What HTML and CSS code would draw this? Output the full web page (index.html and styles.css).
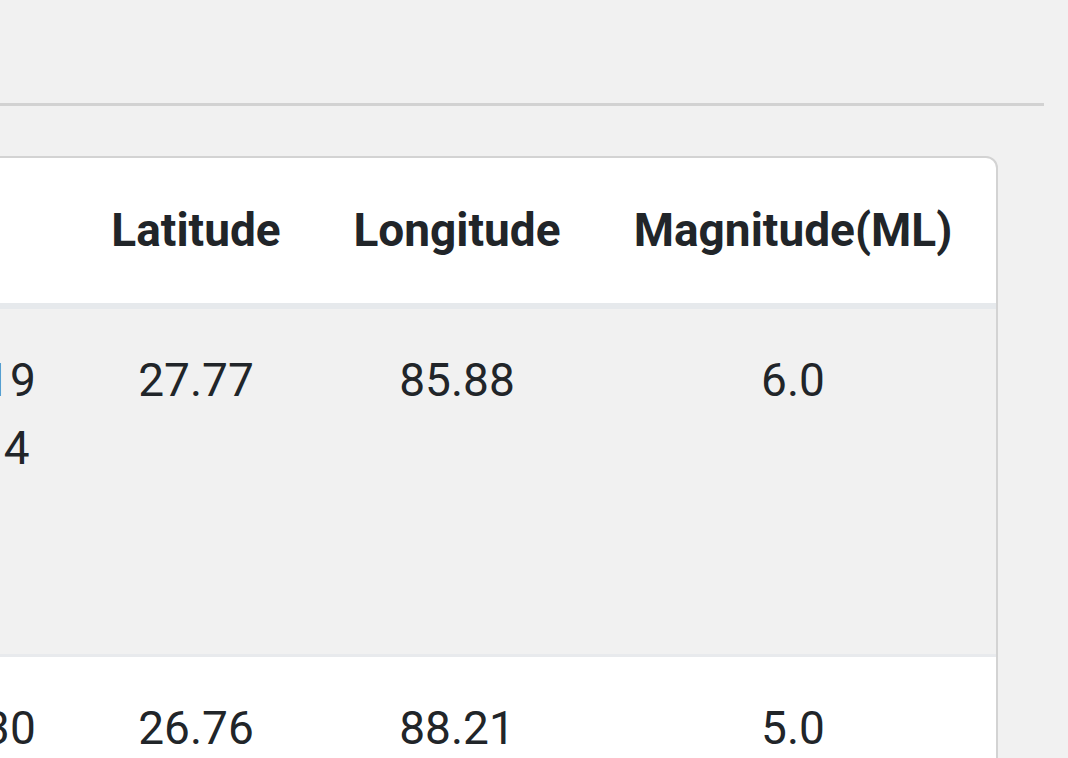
FILE: index.html
```html
<!DOCTYPE html>
<html lang="en">
<head>
<meta charset="utf-8">
<title>Earthquake list</title>
<link rel="stylesheet" href="styles.css">
</head>
<body>
<main class="page">
  <hr class="rule">
  <section class="card">
    <table class="quakes">
      <colgroup>
        <col class="c-date">
        <col class="c-lat">
        <col class="c-lon">
        <col class="c-mag">
      </colgroup>
      <thead>
        <tr>
          <th>Date / Time</th>
          <th>Latitude</th>
          <th>Longitude</th>
          <th>Magnitude(ML)</th>
        </tr>
      </thead>
      <tbody>
        <tr class="striped">
          <td>2015/04/25 11:56:19<br>2015-04-25 06:11:14<br>Nepal Time<br>(UTC +5:45)</td>
          <td>27.77</td>
          <td>85.88</td>
          <td>6.0</td>
        </tr>
        <tr>
          <td>2015/05/12 12:50:30<br>2015-05-12 07:05:25<br>Nepal Time<br>(UTC +5:45)</td>
          <td>26.76</td>
          <td>88.21</td>
          <td>5.0</td>
        </tr>
      </tbody>
    </table>
  </section>
</main>
</body>
</html>
```

FILE: styles.css
```css
html, body {
  margin: 0;
  padding: 0;
  overflow: hidden;
  background: #f1f1f1;
}

body {
  font-family: Roboto, "Liberation Sans", sans-serif;
  color: #212529;
}

.page {
  box-sizing: border-box;
  width: 1476px;
  margin-left: -432px;
  padding-top: 103px;
}

.rule {
  margin: 0 0 50px 0;
  border: 0;
  border-top: 3px solid #d2d2d2;
  height: 0;
}

.card {
  margin-right: 46px;
  background: #ffffff;
  border: 2px solid #d3d3d3;
  border-radius: 12px;
  overflow: hidden;
}

.quakes {
  width: 100%;
  table-layout: fixed;
  border-collapse: collapse;
}

.c-date { width: 498px; }
.c-lat { width: 256px; }
.c-lon { width: 266px; }
.c-mag { width: 406px; }

.quakes th {
  font-size: 46px;
  font-weight: 700;
  line-height: 69px;
  padding: 38px 0;
  text-align: center;
  white-space: nowrap;
  border-bottom: 6px solid #e6e9ec;
}

.quakes td {
  font-size: 46px;
  font-weight: 400;
  line-height: 68px;
  padding: 37px 0 36px;
  text-align: center;
  vertical-align: top;
  white-space: nowrap;
}

.quakes tbody tr + tr td {
  border-top: 3px solid #e8eaed;
}

.striped {
  background: #f1f1f1;
}
```
